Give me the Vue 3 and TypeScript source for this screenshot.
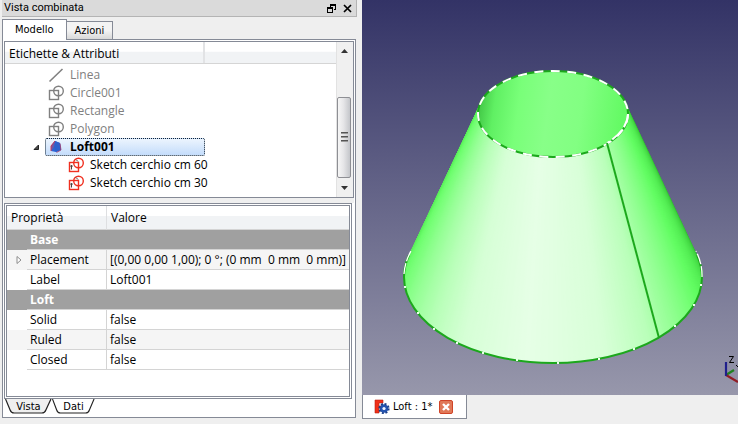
<script setup lang="ts">
import { ref } from 'vue'

interface TreeItem {
  label: string
  icon: 'line' | 'sketch' | 'loft' | 'active'
  depth: number
}

interface PropertyRow {
  name: string
  value?: string
  group?: boolean
  expandable?: boolean
}

const treeItems: TreeItem[] = [
  { label: 'Linea', icon: 'line', depth: 0 },
  { label: 'Circle001', icon: 'sketch', depth: 0 },
  { label: 'Rectangle', icon: 'sketch', depth: 0 },
  { label: 'Polygon', icon: 'sketch', depth: 0 },
  { label: 'Loft001', icon: 'loft', depth: 0 },
  { label: 'Sketch cerchio cm 60', icon: 'active', depth: 1 },
  { label: 'Sketch cerchio cm 30', icon: 'active', depth: 1 },
]

const properties: PropertyRow[] = [
  { name: 'Base', group: true },
  { name: 'Placement', value: '[(0,00 0,00 1,00); 0 °; (0 mm  0 mm  0 mm)]', expandable: true },
  { name: 'Label', value: 'Loft001' },
  { name: 'Loft', group: true },
  { name: 'Solid', value: 'false' },
  { name: 'Ruled', value: 'false' },
  { name: 'Closed', value: 'false' },
]

const topTab = ref('Modello')
const bottomTab = ref('Dati')

// Loft surface: thin facets between the upper and the lower circle.
const upper = { cx: 191, cy: 114, rx: 75, ry: 43 }
const lower = { cx: 191, cy: 277, rx: 149, ry: 86 }

type Stop = [angle: number, r: number, g: number, b: number]
const shading: Stop[] = [
  [-16, 46, 176, 46],
  [-6, 66, 214, 66],
  [4, 84, 238, 84],
  [14, 98, 253, 98],
  [25, 122, 255, 122],
  [40, 157, 255, 157],
  [50, 186, 255, 186],
  [70, 216, 255, 216],
  [100, 230, 255, 230],
  [127, 214, 255, 214],
  [143, 186, 255, 186],
  [158, 154, 255, 154],
  [170, 128, 255, 128],
  [182, 108, 254, 108],
  [196, 84, 232, 84],
]

function shade(angle: number): string {
  let i = 1
  while (i < shading.length - 1 && shading[i][0] < angle) i++
  const a = shading[i - 1]
  const b = shading[i]
  const t = (angle - a[0]) / (b[0] - a[0])
  const mix = (k: number) => Math.round(a[k] + (b[k] - a[k]) * t)
  return `rgb(${mix(1)}, ${mix(2)}, ${mix(3)})`
}

function onCircle(c: typeof upper, angle: number): string {
  const rad = (angle * Math.PI) / 180
  return `${(c.cx + c.rx * Math.cos(rad)).toFixed(2)},${(c.cy + c.ry * Math.sin(rad)).toFixed(2)}`
}

// Each facet reaches well under the next one, so that no seam shows between them.
const facets: { points: string; color: string }[] = []
for (let a = -15; a < 195; a++) {
  const end = Math.min(a + 6, 195)
  facets.push({
    points: [onCircle(upper, a), onCircle(lower, a), onCircle(lower, end), onCircle(upper, end)].join(' '),
    color: shade(a + 0.5),
  })
}

const ticks = [5, 19, 35, 57, 72, 88, 104, 118, 130, 143, 155, 173].map((a) => {
  const [x, y] = onCircle(lower, a).split(',').map(Number)
  return { x: Math.round(x) - 1, y: Math.round(y) - 1 }
})
</script>

<template>
  <div class="window">
    <div class="workspace">
      <section class="dock" aria-labelledby="dock-title">
        <header class="dock-title">
          <span id="dock-title">Vista combinata</span>
          <span class="dock-buttons">
            <button type="button" aria-label="Sgancia">
              <svg width="9" height="9" viewBox="0 0 9 9" shape-rendering="crispEdges">
                <path d="M3 0H9V6H7V5H8V2H4V3H3ZM0 3H6V9H0ZM1 5V8H5V5Z" fill="#000" fill-rule="evenodd" />
              </svg>
            </button>
            <button type="button" aria-label="Chiudi">
              <svg width="9" height="9" viewBox="0 0 9 9">
                <path d="M1 1L8 8M8 1L1 8" stroke="#000" stroke-width="1.7" />
              </svg>
            </button>
          </span>
        </header>

        <nav class="top-tabs">
          <button
            v-for="tab in ['Modello', 'Azioni']"
            :key="tab"
            type="button"
            :class="{ current: topTab === tab }"
            @click="topTab = tab"
          >{{ tab }}</button>
        </nav>

        <div class="pane">
          <div class="tree-frame">
            <div class="tree">
              <div class="tree-header"><span>Etichette &amp; Attributi</span></div>
              <ul>
                <li
                  v-for="item in treeItems"
                  :key="item.label"
                  :class="{ child: item.depth === 1, selected: item.icon === 'loft', dim: item.icon === 'line' || item.icon === 'sketch' }"
                >
                  <svg class="branch" width="7" height="7" viewBox="0 0 7 7">
                    <path v-if="item.icon === 'loft'" d="M5.500 1V5.500H1Z" fill="#4a4a4a" stroke="#222" />
                  </svg>
                  <span class="node">
                    <svg width="16" height="16" viewBox="0 0 16 16">
                      <path v-if="item.icon === 'line'" d="M1.500 14.500L14.500 2" stroke="#808080" stroke-width="1.6" />
                      <g v-else-if="item.icon === 'loft'">
                        <path d="M3 7L7 2L12 4L13 11L8 13L3 12Z" fill="#2c64d4" />
                        <path d="M7 2L12 4L13 11L8 13L6 8Z" fill="#2c60cc" />
                        <path d="M3 12V7L7 2L6 8Z" fill="#6c58a8" />
                        <path d="M3 12V7L7 2" fill="none" stroke="#c83858" />
                        <path d="M8.500 13.500L13 11L12 4.500" fill="none" stroke="#a83868" stroke-width=".8" />
                      </g>
                      <g v-else fill="none" :stroke="item.icon === 'active' ? '#f03020' : '#808080'" stroke-width="1.4">
                        <rect x="1.500" y="5.500" width="9" height="9" />
                        <circle cx="10.500" cy="6" r="4.800" />
                        <path v-if="item.icon === 'active'" d="M3.500 12.500V8.500M2.500 9.500L3.500 8L4.500 9.500M8 2.500L10 4.500" stroke="#444" stroke-width="1" />
                      </g>
                    </svg>
                    <span>{{ item.label }}</span>
                  </span>
                </li>
              </ul>
            </div>
            <div class="scrollbar" aria-hidden="true">
              <svg width="7" height="4" viewBox="0 0 7 4"><path d="M0 4L3.500 0L7 4Z" fill="#333" /></svg>
              <div class="track"><div class="thumb"><i></i><i></i><i></i></div></div>
              <svg width="7" height="4" viewBox="0 0 7 4"><path d="M0 0L3.500 4L7 0Z" fill="#333" /></svg>
            </div>
          </div>

          <div class="properties">
            <div class="properties-inner">
              <table>
                <colgroup>
                  <col class="twisty-col" />
                  <col class="name-col" />
                  <col />
                </colgroup>
                <thead>
                  <tr><th class="name-head" colspan="2">Proprietà</th><th>Valore</th></tr>
                </thead>
                <tbody>
                  <tr v-for="row in properties" :key="row.name" :class="{ group: row.group, shaded: row.expandable || row.name === 'Ruled' }">
                    <td class="twisty">
                      <svg v-if="row.expandable" width="6" height="8" viewBox="0 0 6 8">
                        <path d="M1 0.500L5 4L1 7.500Z" fill="#fff" stroke="#8c8c8c" />
                      </svg>
                    </td>
                    <th v-if="row.group" scope="rowgroup" colspan="2">{{ row.name }}</th>
                    <template v-else>
                      <td class="name">{{ row.name }}</td>
                      <td class="value">{{ row.value }}</td>
                    </template>
                  </tr>
                </tbody>
              </table>
            </div>
          </div>

          <nav class="bottom-tabs">
            <button
              v-for="tab in ['Vista', 'Dati']"
              :key="tab"
              type="button"
              :class="{ current: bottomTab === tab }"
              @click="bottomTab = tab"
            >
              <svg viewBox="0 0 46 15" preserveAspectRatio="none">
                <path
                  d="M0.500 0L5 11Q6 14 9 14H36Q39 14 40 11L45 0"
                  :fill="bottomTab === tab ? '#fff' : '#efefef'"
                  stroke="#222"
                  stroke-width="1.2"
                />
              </svg>
              <span>{{ tab }}</span>
            </button>
          </nav>
        </div>
      </section>

      <main class="document">
        <svg class="scene" viewBox="0 0 376 395" preserveAspectRatio="xMidYMid slice" role="img" aria-label="Loft">
          <defs>
            <linearGradient id="inside" x1="0" y1="0" x2="1" y2="0.08">
              <stop offset="0" stop-color="#2fb035" />
              <stop offset=".05" stop-color="#46cc4a" />
              <stop offset=".14" stop-color="#60f063" />
              <stop offset=".3" stop-color="#79ff79" />
              <stop offset=".5" stop-color="#88ff88" />
              <stop offset=".72" stop-color="#82ff82" />
              <stop offset="1" stop-color="#64fa64" />
            </linearGradient>
          </defs>
          <polygon v-for="(f, i) in facets" :key="i" :points="f.points" :fill="f.color" />
          <ellipse cx="191" cy="114" rx="75" ry="43" fill="url(#inside)" />
          <g fill="none" stroke-width="2">
            <ellipse cx="191" cy="114" rx="75" ry="43" stroke="#1ca81c" />
            <ellipse cx="191" cy="114" rx="75" ry="43" stroke="#fff" stroke-dasharray="9 7.500" />
            <path d="M266 114A75 43 0 0 1 245 143" stroke="#fff" stroke-dasharray="14 3" />
            <path d="M42 277A149 86 0 0 0 340 277" stroke="#1ca81c" />
            <path d="M42 277A149 86 0 0 1 47 255M340 277A149 86 0 0 0 335 255" stroke="#1ca81c" />
            <path d="M42 274A149 86 0 0 1 49 251M340 277A149 86 0 0 0 334 251" stroke="#fff" stroke-width="1.300" stroke-dasharray="11 2" />
            <path d="M245 143L297 338" stroke="#1ca81c" />
          </g>
          <rect v-for="t in ticks" :key="t.x" :x="t.x" :y="t.y" width="2" height="2" fill="#e8ffe8" />
          <g fill="none" stroke-width="2.200">
            <path d="M364 375L372 370" stroke="#208020" />
            <path d="M364 375L376 382" stroke="#901c24" />
            <path d="M364 376V362" stroke="#20208c" />
          </g>
          <path d="M367 356.500H371.500L367.500 362.500H372M374 365L376 367" fill="none" stroke="#000" />
        </svg>
        <div class="document-tab">
          <svg width="16" height="16" viewBox="0 0 16 16">
            <path d="M1 1H9V4H5V7H8V9H5V14H1Z" fill="#f03018" stroke="#b82010" stroke-width=".6" />
            <circle cx="10" cy="9.500" r="4.300" fill="#2454b0" />
            <circle cx="10" cy="9.500" r="4.700" fill="none" stroke="#183c88" stroke-width="1.800" stroke-dasharray="2 1.690" />
            <circle cx="10" cy="9.500" r="1.600" fill="#f4f6ff" />
          </svg>
          <span>Loft : 1*</span>
          <button type="button" aria-label="Chiudi Loft">
            <svg width="14" height="14" viewBox="0 0 14 14">
              <rect x=".5" y=".5" width="13" height="13" rx="1.500" fill="#e07858" stroke="#d04428" />
              <path d="M4 4L10 10M10 4L4 10" stroke="#fff" stroke-width="2.400" />
            </svg>
          </button>
        </div>
      </main>
    </div>
    <footer class="status"><i></i><i></i></footer>
  </div>
</template>

<style>
body {
  background: #efefef;
}
</style>

<style scoped>
.window {
  --frame: #858a96;
  display: flex;
  flex-direction: column;
  min-height: 100vh;
  box-sizing: border-box;
  background: #efefef;
  color: #000;
  font-family: "Open Sans", "Noto Sans", sans-serif;
  font-size: 12px;
  line-height: 18px;
}

.window *,
.window *::before {
  box-sizing: border-box;
}

button {
  margin: 0;
  padding: 0;
  border: 0;
  background: none;
  color: inherit;
  font: inherit;
}

svg {
  display: block;
  flex: none;
}

.workspace {
  flex: 1;
  display: grid;
  grid-template-columns: minmax(0, 362fr) minmax(0, 376fr);
}

.dock {
  display: flex;
  flex-direction: column;
  padding: 0 5px 6px 2px;
}

.dock-title {
  display: flex;
  align-items: center;
  justify-content: space-between;
  height: 17px;
  padding: 0 4px 0 2px;
  border-bottom: 1px solid #b4b4b4;
  border-right: 1px solid #b4b4b4;
  background: #dadada;
  font-family: Roboto, "Open Sans", sans-serif;
  font-size: 11px;
}

.top-tabs,
.bottom-tabs,
.document-tab {
  font-family: "DejaVu Sans Condensed", "DejaVu Sans", sans-serif;
  font-size: 11px;
}

.dock-buttons {
  display: flex;
  gap: 7px;
}

.top-tabs {
  display: flex;
  align-items: flex-end;
  height: 22px;
  padding-top: 2px;
}

.top-tabs button {
  height: 18px;
  padding: 0 8px;
  border: 1px solid var(--frame);
  border-left: 0;
  border-bottom: 0;
  background: linear-gradient(#f3f3f3 50%, #d8d8d8);
}

.top-tabs .current {
  height: 21px;
  margin-bottom: -1px;
  padding: 0 12px;
  border-left: 1px solid var(--frame);
  background: #fff;
  z-index: 1;
}

.pane {
  flex: 1;
  display: flex;
  flex-direction: column;
  margin-right: 1px;
  padding: 1px;
  border: 1px solid var(--frame);
  background: #fff;
}

.tree-frame {
  display: flex;
  border: 1px solid var(--frame);
  background: #fff;
  box-shadow: 0 5px 0 #efefef;
}

.tree {
  flex: 1;
  min-width: 0;
}

.tree-header {
  height: 22px;
  padding-left: 4px;
  border-bottom: 1px solid #d5d5d5;
  background: linear-gradient(#fff 45%, #f1f3f5 46%);
}

.tree-header span {
  display: block;
  width: 196px;
  height: 21px;
  border-right: 2px solid #e2e3e5;
  line-height: 24px;
}

.tree ul {
  margin: 0;
  padding: 2px 0 5px;
  list-style: none;
}

.tree li {
  display: flex;
  align-items: center;
  height: 18px;
  padding-left: 28px;
}

.tree li.child {
  padding-left: 48px;
}

.branch {
  margin-right: 5px;
}

.node {
  display: flex;
  align-items: center;
  gap: 6px;
  height: 18px;
  padding: 0 3px;
}

.dim {
  color: #808080;
}

.selected .node {
  width: 160px;
  border: 1px dotted #123;
  border-radius: 2px;
  padding: 0 2px;
  background: linear-gradient(#ecf4fe, #c4dcfb);
  font-weight: 700;
}

.scrollbar {
  display: flex;
  flex-direction: column;
  align-items: center;
  width: 17px;
  padding: 7px 2px 7px 0;
  border-left: 1px solid #e2e2e2;
  background: #f0f0f0;
}

.track {
  flex: 1;
  display: flex;
  flex-direction: column;
  justify-content: flex-end;
  width: 100%;
  padding-bottom: 8px;
}

.thumb {
  display: flex;
  flex-direction: column;
  align-items: center;
  justify-content: center;
  gap: 2px;
  height: 65%;
  border: 1px solid #8e8f94;
  border-radius: 2px;
  background: linear-gradient(90deg, #f6f6f6, #e6e6e8 45%, #c4c6ca);
}

.thumb i {
  width: 7px;
  height: 2px;
  background: linear-gradient(#555 50%, #999 50%);
}

.properties {
  flex: 1;
  display: flex;
  margin: 5px 2px 0 0;
  padding: 1px;
  border: 1px solid var(--frame);
}

.properties-inner {
  flex: 1;
  padding-bottom: 26px;
  border: 1px solid var(--frame);
}

table {
  width: 100%;
  border-collapse: separate;
  border-spacing: 0;
  table-layout: fixed;
}

.twisty-col {
  width: 20px;
}

.name-col {
  width: 80px;
}

th,
td {
  height: 20px;
  padding: 0 0 0 3px;
  border-bottom: 1px solid #d4d4d4;
  text-align: left;
  font-weight: 400;
  white-space: pre;
  line-height: 18px;
}

thead th {
  height: 24px;
  padding-left: 4px;
  background: linear-gradient(#fff 42%, #f1f3f5 43%);
}

thead .name-head {
  border-right: 1px solid #dedfe1;
}

.twisty {
  padding-left: 9px;
  border-bottom-color: transparent;
}

.name {
  border-right: 1px solid #d4d4d4;
}

.group th,
.group td {
  background: #a0a0a0;
  color: #fff;
  font-weight: 700;
}

.shaded td {
  background: #f5f5f5;
}

.bottom-tabs {
  display: flex;
  height: 17px;
  padding-left: 1px;
}

.bottom-tabs button {
  position: relative;
  width: 47px;
  height: 15px;
  line-height: 14px;
}

.bottom-tabs .current {
  width: 43px;
}

.bottom-tabs svg {
  position: absolute;
  inset: 0;
  width: 100%;
  height: 100%;
}

.bottom-tabs span {
  position: relative;
}

.document {
  display: flex;
  flex-direction: column;
  align-items: flex-start;
  min-width: 0;
  padding: 0 0 5px 0;
}

.scene {
  flex: 1 1 0;
  width: 100%;
  min-height: 0;
  background: linear-gradient(#333366, #9797ab);
}

.document-tab {
  display: flex;
  align-items: center;
  height: 24px;
  padding: 0 13px 0 11px;
  border: 1px solid var(--frame);
  border-top: 0;
  background: #fff;
}

.document-tab span {
  margin: 0 7px 0 3px;
}

.status {
  display: grid;
  grid-template-columns: 427fr 307fr;
  gap: 4px;
  height: 1px;
}

.status i {
  background: #b4b4b4;
}
</style>
